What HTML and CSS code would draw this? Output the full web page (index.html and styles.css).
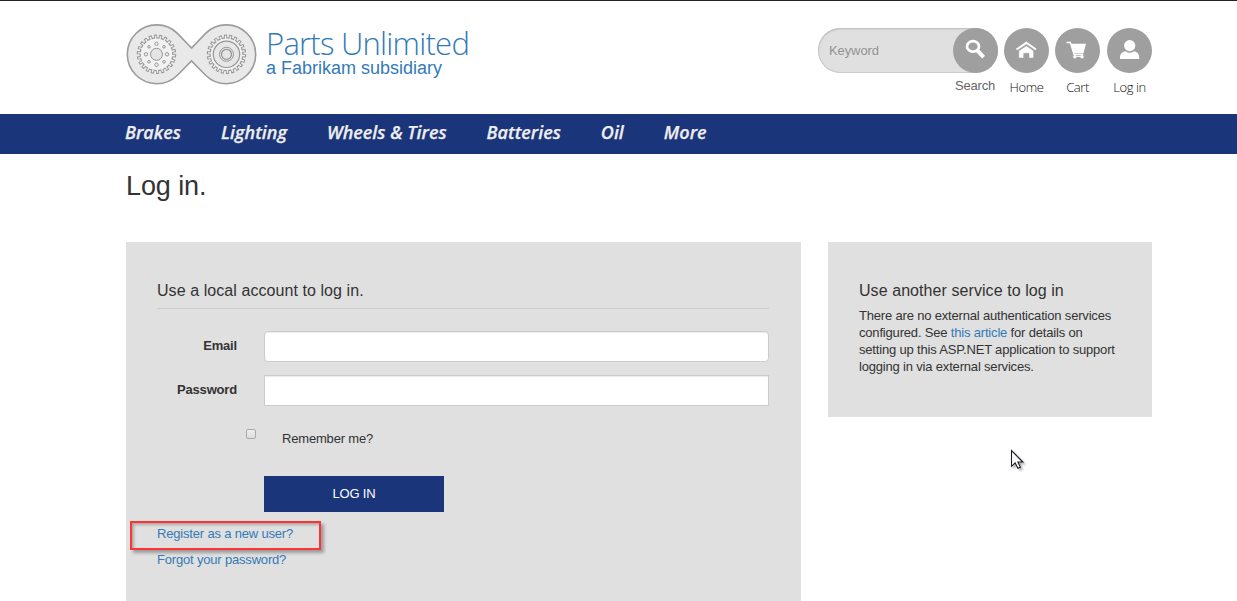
FILE: index.html
```html
<!DOCTYPE html>
<html lang="en">
<head>
<meta charset="utf-8">
<title>Log in - Parts Unlimited</title>
<link rel="stylesheet" href="styles.css">
</head>
<body>
<header class="header">
  <a class="brand">
    <svg class="logo" width="131" height="61" viewBox="0 0 131 61">
      <path d="M65.5 24 51.4 9.4A29.4 29.4 0 1 0 51.4 51.2L65.5 37 79.6 51.2A29.4 29.4 0 1 0 79.6 9.4Z" fill="#e9e9e9" stroke="#9c9c9c" stroke-width="1.6"/>
      <g fill="none">
        <g id="gear">
          <circle cx="30.5" cy="30.3" r="17" fill="#969696"/>
          <circle cx="30.5" cy="30.3" r="18" pathLength="220" stroke="#969696" stroke-width="3.4" stroke-dasharray="6 4"/>
          <circle cx="30.5" cy="30.3" r="15.8" fill="#f2f2f2"/>
          <circle cx="30.5" cy="30.3" r="17" pathLength="220" stroke="#f2f2f2" stroke-width="3.2" stroke-dasharray="2.8 7.2" stroke-dashoffset="-1.6"/>
        </g>
        <use href="#gear" x="70"/>
        <g stroke="#969696">
          <circle cx="30.5" cy="30.3" r="6" fill="#e4e4e4"/>
          <circle cx="30.5" cy="19.8" r="1.7"/><circle cx="30.5" cy="40.8" r="1.7"/>
          <circle cx="20" cy="30.3" r="1.7"/><circle cx="41" cy="30.3" r="1.7"/>
          <circle cx="23" cy="22.8" r="1.3"/><circle cx="38" cy="22.8" r="1.3"/>
          <circle cx="23" cy="37.8" r="1.3"/><circle cx="38" cy="37.8" r="1.3"/>
          <circle cx="100.5" cy="30.3" r="13.2" stroke-width="1.2" fill="#e6e6e6"/>
          <circle cx="100.5" cy="30.3" r="7"/>
          <circle cx="100.5" cy="30.3" r="5" stroke-width="1.3"/>
        </g>
      </g>
    </svg>
    <span class="brand-text">
      <span class="brand-name">Parts Unlimited</span>
      <span class="brand-sub">a Fabrikam subsidiary</span>
    </span>
  </a>
  <div class="tools">
    <form class="search">
      <div class="search-box">
        <span class="keyword">Keyword</span>
        <span class="disc">
          <svg width="45" height="45" viewBox="0 0 45 45" fill="none" stroke="#fff"><ellipse cx="20" cy="18.4" rx="6" ry="5.2" stroke-width="2.7"/><path d="M24.2 22.4 30.6 29.2" stroke-width="4"/></svg>
        </span>
      </div>
      <span class="search-label">Search</span>
    </form>
    <a class="tool home">
      <span class="disc"><svg width="45" height="45" viewBox="0 0 45 45" fill="#fff"><path d="M12.5 21.5 22.4 14.8 32 21.5" fill="none" stroke="#fff" stroke-width="2"/><path d="M14.8 22.8 22.4 17.8 29.6 22.8V30H25V25.3H19.7V30H14.8Z" stroke="#9f9f9f" stroke-width=".5"/></svg></span>
      <span class="tool-label">Home</span>
    </a>
    <a class="tool cart">
      <span class="disc"><svg width="45" height="45" viewBox="0 0 45 45" fill="#fff"><path d="M11.5 14.4H15.3L19 26.3H28.3" fill="none" stroke="#fff" stroke-width="1.5"/><path d="M15.8 15.8H31L28.5 25H18.5Z"/><circle cx="19.8" cy="28.7" r="1.7"/><circle cx="27" cy="28.7" r="1.7"/><path d="M19.8 27.7h7v1.2h-7z"/></svg></span>
      <span class="tool-label">Cart</span>
    </a>
    <a class="tool user">
      <span class="disc"><svg width="45" height="45" viewBox="0 0 45 45" fill="#fff"><circle cx="22.7" cy="17.6" r="5.6"/><path d="M13 31V29.2C13 25.6 15.4 23.8 18.5 23.2Q22.7 26.3 26.9 23.2C30 23.8 32.2 25.6 32.2 29.2V31Z"/></svg></span>
      <span class="tool-label">Log in</span>
    </a>
  </div>
</header>
<nav class="nav">
  <a class="nav-link">Brakes</a>
  <a class="nav-link">Lighting</a>
  <a class="nav-link">Wheels &amp; Tires</a>
  <a class="nav-link">Batteries</a>
  <a class="nav-link">Oil</a>
  <a class="nav-link">More</a>
</nav>
<main class="page">
  <h1 class="title">Log in.</h1>
  <div class="columns">
    <section class="panel local">
      <h2 class="panel-title ruled">Use a local account to log in.</h2>
      <div class="row"><label class="label" for="email">Email</label><input class="field rounded" id="email" type="text"></div>
      <div class="row"><label class="label" for="password">Password</label><input class="field" id="password" type="password"></div>
      <div class="remember"><input class="check" id="remember" type="checkbox"><label for="remember">Remember me?</label></div>
      <button class="submit" type="button">LOG IN</button>
      <div class="register"><a class="link">Register as a new user?</a></div>
      <a class="link forgot">Forgot your password?</a>
    </section>
    <section class="panel external">
      <h2 class="panel-title">Use another service to log in</h2>
      <p class="note">There are no external authentication services configured. See <a class="link">this article</a> for details on setting up this ASP.NET application to support logging in via external services.</p>
    </section>
  </div>
</main>
<svg class="cursor" width="18" height="26" viewBox="0 0 18 26"><path d="M1.5 1.5V17.3L5.2 13.9 7.9 19.3 10.4 18.2 7.9 13H12.8Z" fill="#fff" stroke="#1c1c28" stroke-width="1.1"/></svg>
</body>
</html>
```

FILE: styles.css
```css
* { box-sizing: border-box; }
body {
  margin: 0;
  height: 601px;
  overflow: hidden;
  position: relative;
  background: #fff;
  color: #333;
  font: 13px/17px "Liberation Sans", Arial, sans-serif;
}
svg { display: block; }
.header {
  height: 114px;
  border-top: 1px solid #222;
  padding: 23px 85px 0 126px;
  display: flex;
  justify-content: space-between;
  align-items: flex-start;
}
.brand { display: flex; color: #337ab7; }
.brand-text { display: flex; flex-direction: column; padding-left: 9px; white-space: nowrap; }
.brand-name { font: 300 31px/36px "Open Sans", sans-serif; letter-spacing: -.75px; padding-top: 1px; }
.brand-sub { font-size: 18px; line-height: 20px; margin-top: -3px; }
.tools { display: flex; padding-top: 4px; }
.search { width: 180px; display: flex; flex-direction: column; }
.search-box {
  height: 45px;
  border-radius: 23px;
  background: #e0e0e0;
  box-shadow: inset 0 1px 2px #bbb, inset 0 0 0 1px #ccc;
  display: flex;
  justify-content: space-between;
  align-items: center;
  padding-left: 11px;
}
.keyword { color: #939393; letter-spacing: -.1px; }
.disc { width: 45px; height: 45px; border-radius: 50%; background: #9f9f9f; display: block; }
.search-label { color: #666; align-self: flex-end; padding-right: 3px; margin-top: 4px; letter-spacing: -.2px; }
.tool { display: flex; flex-direction: column; align-items: center; width: 45px; }
.home, .cart { margin-left: 6px; }
.user { margin-left: 7px; }
.tool-label { font: 300 13px/18px "Open Sans", sans-serif; letter-spacing: -.45px; margin-top: 5px; white-space: nowrap; color: #111; }
.nav {
  height: 40px;
  background: #1b357a;
  padding-left: 125px;
  display: flex;
  gap: 40px;
}
.nav-link {
  color: #eee;
  font: italic 600 18px/37px "Open Sans", sans-serif;
  letter-spacing: .01px;
  -webkit-text-stroke: .25px #eee;
  white-space: nowrap;
}
.page { padding: 16px 85px 0 126px; }
.title { margin: 0 0 40px; font-size: 27px; font-weight: 400; line-height: 32px; letter-spacing: -.1px; }
.columns { display: grid; grid-template-columns: 675px 324px; gap: 27px; align-items: start; }
.panel { background: #e0e0e0; padding: 39px 32px 0 31px; letter-spacing: -.18px; }
.local { height: 380px; }
.external { height: 175px; }
.panel-title { margin: 0; font-size: 16px; font-weight: 400; line-height: 20px; letter-spacing: .07px; }
.ruled { border-bottom: 1px solid #ccc; padding-bottom: 7px; margin-bottom: 22px; }
.row { display: grid; grid-template-columns: 80px 505px; gap: 27px; margin-bottom: 13px; }
.label { text-align: right; font-weight: 700; padding-top: 6px; }
.field {
  width: 505px;
  height: 31px;
  margin: 0;
  border: 1px solid #ccc;
  background: #fff;
  box-shadow: inset 0 1px 1px rgba(0, 0, 0, .08);
}
.rounded { border-radius: 4px; }
.remember { display: flex; padding: 11px 0 0 89px; }
.check {
  appearance: none;
  width: 10px;
  height: 10px;
  margin: -1px 26px 0 0;
  border: 1px solid #aaa;
  border-radius: 2px;
  background: linear-gradient(#eee, #ddd);
}
.submit {
  display: block;
  width: 180px;
  height: 36px;
  margin: 29px 0 0 107px;
  border: 0;
  padding: 0 0 2px;
  background: #1b357a;
  color: #fff;
  font: 13px/17px "Liberation Sans", Arial, sans-serif;
  letter-spacing: -.15px;
}
.link { color: #337ab7; }
.register {
  width: 191px;
  height: 29px;
  margin: 9px 0 1px -27px;
  padding: 2px 0 0 25px;
  border: 2px solid #f33;
  box-shadow: 3px 3px 3px rgba(0, 0, 0, .3), inset 2px 2px 3px rgba(0, 0, 0, .25);
}
.forgot { display: block; }
.note { margin: 6px 0 0; }
.cursor {
  position: absolute;
  left: 1010px;
  top: 449px;
  filter: drop-shadow(2px 2px 1px rgba(0, 0, 0, .3));
}
```
